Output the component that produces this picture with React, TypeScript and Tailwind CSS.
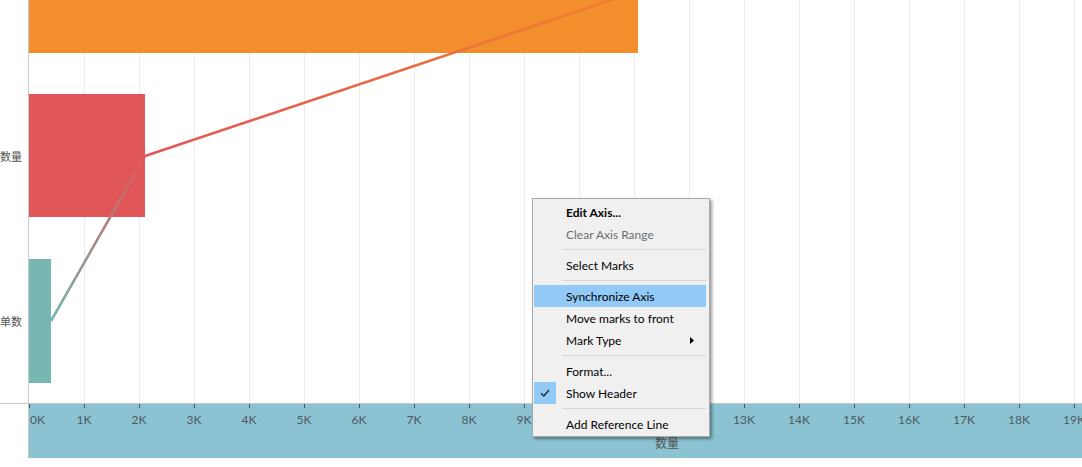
import React from 'react';

const ticks = Array.from({ length: 20 }, (_, i) => i);
const step = 55;

type MenuEntry =
  | { kind: 'item'; label: string; bold?: boolean; disabled?: boolean; active?: boolean; checked?: boolean; sub?: boolean }
  | { kind: 'sep' };

const menu: MenuEntry[] = [
  { kind: 'item', label: 'Edit Axis...', bold: true },
  { kind: 'item', label: 'Clear Axis Range', disabled: true },
  { kind: 'sep' },
  { kind: 'item', label: 'Select Marks' },
  { kind: 'sep' },
  { kind: 'item', label: 'Synchronize Axis', active: true },
  { kind: 'item', label: 'Move marks to front' },
  { kind: 'item', label: 'Mark Type', sub: true },
  { kind: 'sep' },
  { kind: 'item', label: 'Format...' },
  { kind: 'item', label: 'Show Header', checked: true },
  { kind: 'sep' },
  { kind: 'item', label: 'Add Reference Line' },
];

function ContextMenu() {
  return (
    <div className="absolute left-[532px] top-[198px] w-[178px] border border-[#a9a9a9] bg-[#f0f0f0] pt-[2px] pb-[1px] pl-[1px] pr-[3px] shadow-[2px_2px_3px_rgba(0,0,0,0.4)] font-['Lato','Liberation_Sans',sans-serif] text-[12px] text-black">
      {menu.map((m, i) =>
        m.kind === 'sep' ? (
          <div key={i} className="flex h-[9px] items-center pl-[28px]">
            <div className="h-px w-full bg-[#d7d7d7]" />
          </div>
        ) : (
          <div
            key={i}
            className={`relative flex h-[22px] items-center pl-[32px] pt-px ${m.active ? 'bg-[#91c9f7]' : ''} ${m.bold ? 'font-bold' : ''} ${m.disabled ? 'text-[#6d6d6d]' : ''}`}
          >
            {m.checked && (
              <div className="absolute left-0 top-0 flex h-[22px] w-[22px] items-center justify-center bg-[#91c9f7]">
                <svg width="10" height="8" viewBox="0 0 10 8">
                  <path d="M1 4.2 L3.8 7 L9 1" fill="none" stroke="#333" strokeWidth="1.6" />
                </svg>
              </div>
            )}
            <span>{m.label}</span>
            {m.sub && (
              <svg className="absolute right-[12px] top-[8px]" width="4" height="7" viewBox="0 0 4 7">
                <path d="M0 0 L4 3.5 L0 7 Z" fill="#000" />
              </svg>
            )}
          </div>
        )
      )}
    </div>
  );
}

export default function App() {
  return (
    <div className="relative h-[467px] w-[1082px] overflow-hidden bg-white">
      <div className="flex h-[403px]">
        <div className="w-[29px] shrink-0 overflow-hidden border-r border-[#c8c8c8] pt-[74px] font-['Noto_Sans_CJK_SC',sans-serif] text-[11px] text-[#555]">
          <div className="flex h-[165px] items-center justify-end whitespace-nowrap pr-[6px]">数量</div>
          <div className="flex h-[165px] items-center justify-end whitespace-nowrap pr-[6px]">订单数</div>
        </div>
        <svg width="1053" height="403" className="block shrink-0">
          <defs>
            <linearGradient id="lineGrad" gradientUnits="userSpaceOnUse" x1="0" y1="321" x2="0" y2="-9">
              <stop offset="0" stopColor="#76b7b2" />
              <stop offset="0.5" stopColor="#e15759" />
              <stop offset="1" stopColor="#ef8030" />
            </linearGradient>
          </defs>
          {ticks.slice(1).map((t) => (
            <line key={t} x1={t * step + 0.5} x2={t * step + 0.5} y1="0" y2="403" stroke="#ececec" strokeWidth="1" />
          ))}
          <rect x="0" y="0" width="609" height="53" fill="#f28e2b" />
          <rect x="0" y="94" width="116" height="123" fill="#e15759" />
          <rect x="0" y="259" width="22" height="124" fill="#76b7b2" />
          <polyline points="22,321 116,156 609,-9" fill="none" stroke="url(#lineGrad)" strokeWidth="2.6" strokeLinejoin="round" />
        </svg>
      </div>
      <div className="flex h-[55px] border-t border-[#c8c8c8]">
        <div className="w-[29px] shrink-0 border-r border-[#c8c8c8] bg-white" />
        <div className="flex-1 bg-[#8bc3d3]">
          <svg width="1053" height="54" className="block font-['Lato','Liberation_Sans',sans-serif]">
            {ticks.map((t) => (
              <line key={t} x1={t * step + 0.5} x2={t * step + 0.5} y1="0" y2="4" stroke="#555" strokeWidth="1" />
            ))}
            {ticks.map((t) => (
              <text
                key={t}
                x={t === 0 ? 1 : t * step}
                y="20"
                textAnchor={t === 0 ? 'start' : 'middle'}
                fontSize="12"
                fill="#4e5a5e"
              >
                {t}K
              </text>
            ))}
            <text x="638" y="44" textAnchor="middle" fontSize="12" fill="#555" fontFamily="'Noto Sans CJK SC', sans-serif">
              数量
            </text>
          </svg>
        </div>
      </div>
      <ContextMenu />
    </div>
  );
}
